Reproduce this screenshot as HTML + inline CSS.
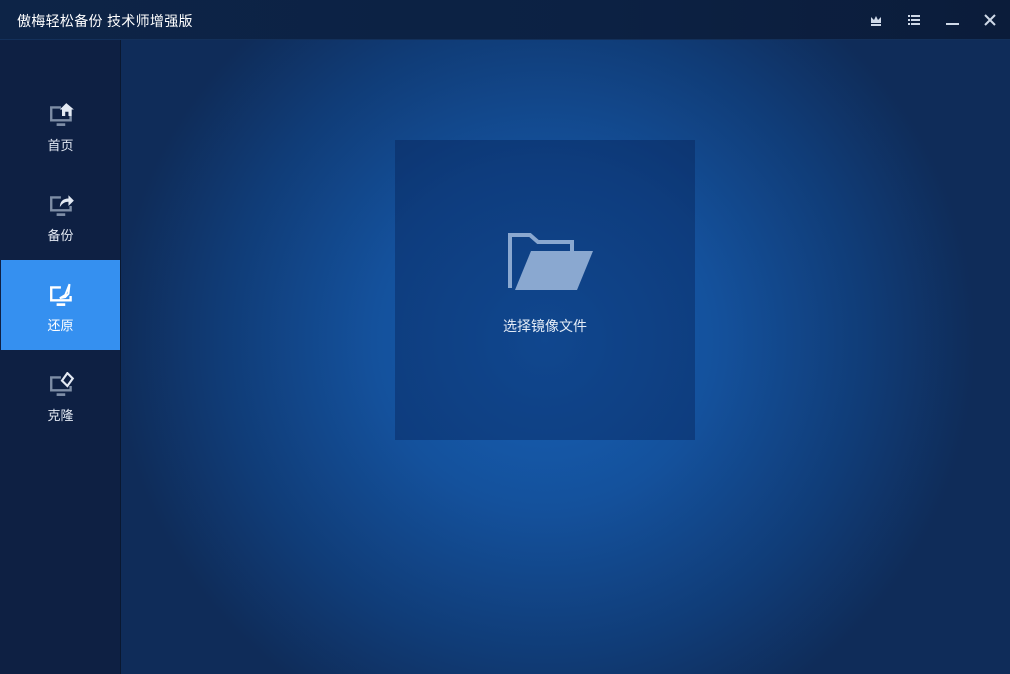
<!DOCTYPE html>
<html><head><meta charset="utf-8"><style>
*{margin:0;padding:0;box-sizing:border-box}
body{width:1010px;height:674px;overflow:hidden;font-family:"Liberation Sans","Noto Sans CJK SC",sans-serif;background:#0c1d3a;position:relative}
.title{position:absolute;left:0;top:0;width:1010px;height:40px;background:linear-gradient(90deg,#0d2447,#0c2143 60%,#0b1c3a);border-bottom:1px solid #13305a}
.title .t{position:absolute;left:17px;top:11px;color:#fff;font-size:14px;letter-spacing:0.3px}
.side{position:absolute;left:0;top:40px;width:121px;height:634px;background:#0e2043;border-right:1px solid #0a1830}
.main{position:absolute;left:121px;top:40px;width:889px;height:634px;background:radial-gradient(ellipse 430px 420px at 424px 300px,#1761b6 0%,#14519c 40%,#103c77 75%,#0f2c59 100%)}
.panel{position:absolute;left:274px;top:100px;width:300px;height:300px;background:rgba(6,30,80,0.38)}
.panel .lbl{position:absolute;left:0;width:300px;top:176px;text-align:center;color:#e4ecf7;font-size:14px}
.item{position:absolute;left:1px;width:119px;height:90px;text-align:center;color:#e3e9f3;font-size:13px}
.item svg{position:absolute;left:47px;top:22px;width:28px;height:28px}
.item span{position:absolute;left:0;width:119px;top:55px}
.sel{background:#3590f0;color:#fff}
.ic{position:absolute;top:12px}
</style></head><body>
<div class="title"><div class="t">傲梅轻松备份 技术师增强版</div>
<svg class="ic" style="left:868px" width="16" height="16" viewBox="0 0 16 16"><path d="M3 5l3 3 2-4 2 4 3-3v6H3z" fill="#cfd9e8"/><rect x="3" y="12" width="10" height="2" fill="#cfd9e8"/></svg>
<svg class="ic" style="left:906px" width="16" height="16" viewBox="0 0 16 16" fill="#cfd9e8"><rect x="2" y="3" width="2" height="2"/><rect x="5" y="3" width="9" height="2"/><rect x="2" y="7" width="2" height="2"/><rect x="5" y="7" width="9" height="2"/><rect x="2" y="11" width="2" height="2"/><rect x="5" y="11" width="9" height="2"/></svg>
<svg class="ic" style="left:944px" width="16" height="16" viewBox="0 0 16 16"><rect x="2" y="11" width="13" height="2" fill="#cfd9e8"/></svg>
<svg class="ic" style="left:982px" width="16" height="16" viewBox="0 0 16 16"><path d="M3 3l10 10M13 3L3 13" stroke="#cfd9e8" stroke-width="2"/></svg>
</div>
<div class="side">
<div class="item" style="top:40px"><svg viewBox="0 0 26 26"><path d="M12 5H3v12h18v-4" fill="none" stroke="#7e8ea6" stroke-width="2.2"/><path d="M8 21h8" stroke="#7e8ea6" stroke-width="2.5"/><path d="M17 1l7 6h-2v6h-3v-4h-3v4h-3V7h-2z" fill="#e3e9f3"/></svg><span>首页</span></div>
<div class="item" style="top:130px"><svg viewBox="0 0 26 26"><path d="M12 5H3v12h18v-4" fill="none" stroke="#7e8ea6" stroke-width="2.2"/><path d="M8 21h8" stroke="#7e8ea6" stroke-width="2.5"/><path d="M11 14c0-5 3-8 8-8V3l5 5-5 5V9c-4 0-6 2-8 5z" fill="#e3e9f3"/></svg><span>备份</span></div>
<div class="item sel" style="top:220px"><svg viewBox="0 0 26 26"><path d="M12 5H3v12h18v-4" fill="none" stroke="#fff" stroke-width="2.2"/><path d="M8 21h8" stroke="#fff" stroke-width="2.5"/><path d="M20 2l-4 10-5 3 5-1 3-3z" fill="none" stroke="#fff" stroke-width="1.8"/></svg><span>还原</span></div>
<div class="item" style="top:310px"><svg viewBox="0 0 26 26"><path d="M12 5H3v12h18v-4" fill="none" stroke="#7e8ea6" stroke-width="2.2"/><path d="M8 21h8" stroke="#7e8ea6" stroke-width="2.5"/><path d="M18 1l5 5-5 7-5-5z" fill="none" stroke="#e3e9f3" stroke-width="2"/></svg><span>克隆</span></div>
</div>
<div class="main"><div class="panel">
<svg style="position:absolute;left:112px;top:92px" width="86" height="60" viewBox="0 0 86 60"><path d="M3 56V3h20l8 7h34v12" fill="none" stroke="#8aa8d0" stroke-width="4"/><path d="M8 58l16-39h62L70 58z" fill="#8aa8d0"/></svg>
<div class="lbl">选择镜像文件</div>
</div></div>
</body></html>
